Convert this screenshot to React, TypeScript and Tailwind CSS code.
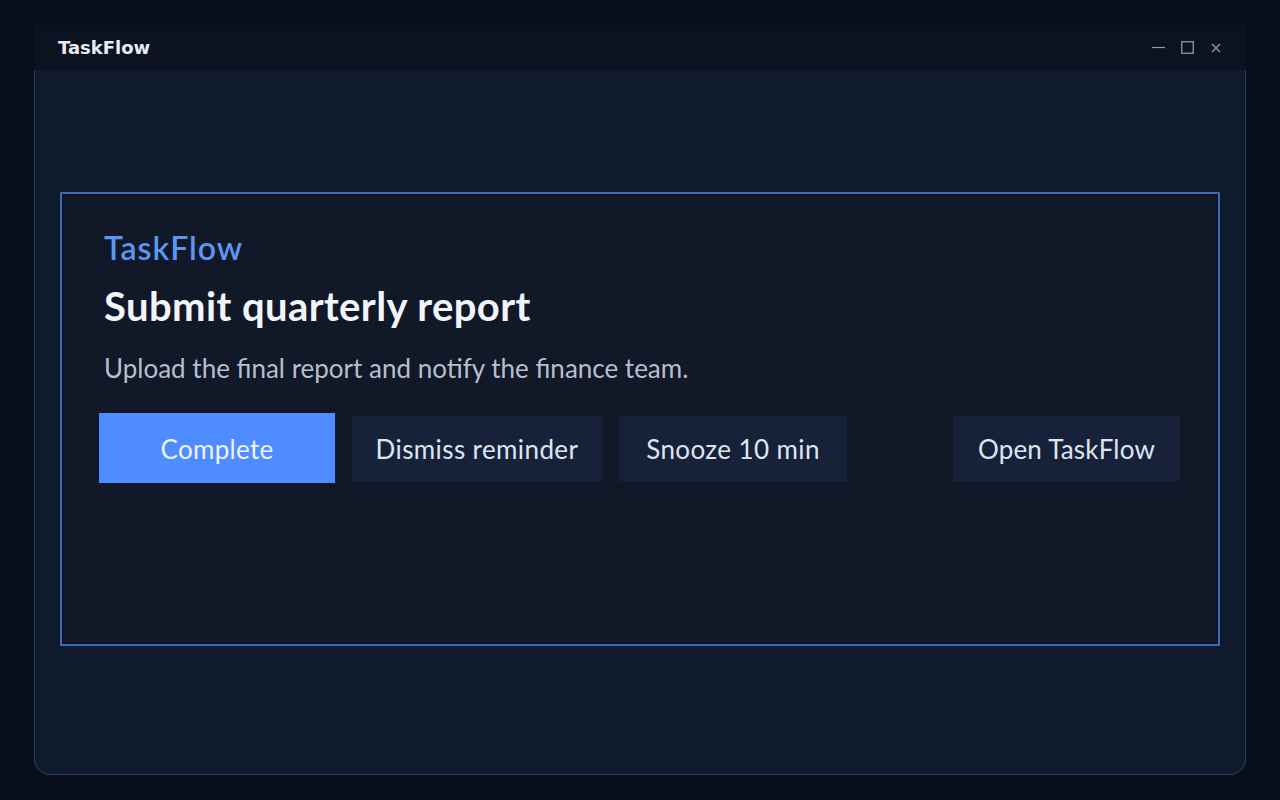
const actions = [
  { label: "Dismiss reminder", width: "w-[250px]" },
  { label: "Snooze 10 min", width: "w-[228px]" },
];

function WindowControls() {
  return (
    <div className="flex items-center text-[#8f99ad]">
      <svg width="13" height="13" viewBox="0 0 13 13" className="mr-[16px]">
        <line x1="0" y1="6.5" x2="13" y2="6.5" stroke="currentColor" strokeWidth="1.2" />
      </svg>
      <svg width="13" height="13" viewBox="0 0 13 13" className="mr-[17px]">
        <rect x="0.75" y="0.75" width="11.5" height="11.5" fill="none" stroke="currentColor" strokeWidth="1.3" />
      </svg>
      <svg width="10" height="10" viewBox="0 0 10 10">
        <path d="M1 1L9 9M9 1L1 9" stroke="currentColor" strokeWidth="1.4" />
      </svg>
    </div>
  );
}

export default function App() {
  return (
    <div className="flex h-[800px] w-[1280px] items-start justify-center bg-[#080e1a] pt-[25px]">
      <div className="flex h-[750px] w-[1212px] flex-col">
        {/* title bar */}
        <div className="flex h-[45px] shrink-0 items-center justify-between bg-[#0b1220] pl-6 pr-[25px]">
          <span className="font-['DejaVu_Sans',sans-serif] text-[18px] font-bold text-[#e6ebf5]">
            TaskFlow
          </span>
          <WindowControls />
        </div>

        {/* window body */}
        <div className="flex flex-1 items-start justify-center rounded-b-2xl border border-t-0 border-[#2c3c5a] bg-[#0f1b2d] pt-[122px]">
          <div className="h-[454px] w-[1160px] border-2 border-[#3b68b8] bg-[#111828] pl-[37px] pr-[38px] pt-[34px] font-['Lato',sans-serif] shadow-[inset_0_0_0_1px_#0b0f1a]">
            <div className="pl-[5px] text-[32px] font-semibold leading-[40px] tracking-[1px] text-[#5e95f0]">
              TaskFlow
            </div>
            <h1 className="mt-[14px] pl-[5px] text-[40px] font-bold leading-[48px] tracking-[0.4px] text-[#f1f4fa]">
              Submit quarterly report
            </h1>
            <p className="mt-[21px] pl-[5px] text-[26px] leading-[34px] text-[#b7bfcf]">
              Upload the final report and notify the finance team.
            </p>
            <div className="mt-[28px] flex items-center">
              <button className="h-[70px] w-[236px] bg-[#4f8cff] pt-[3px] text-[26px] tracking-[0.3px] text-[#eef3ff]">
                Complete
              </button>
              {actions.map((a) => (
                <button
                  key={a.label}
                  className={`ml-[17px] h-[65px] ${a.width} bg-[#17223a] pt-[3px] text-[26px] tracking-[0.4px] text-[#dfe5f0]`}
                >
                  {a.label}
                </button>
              ))}
              <button className="ml-auto h-[65px] w-[227px] bg-[#17223a] pt-[3px] text-[26px] tracking-[0.2px] text-[#dfe5f0]">
                Open TaskFlow
              </button>
            </div>
          </div>
        </div>
      </div>
    </div>
  );
}
